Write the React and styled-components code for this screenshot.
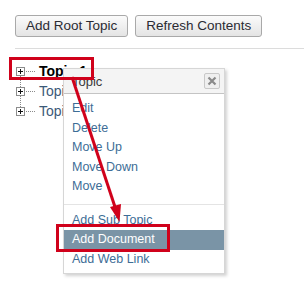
import React from "react"
import styled, { createGlobalStyle } from "styled-components"

const GlobalStyle = createGlobalStyle`
  html, body {
    margin: 0;
    padding: 0;
    background: #ffffff;
    font-family: "Liberation Sans", Arial, sans-serif;
  }
`

const Page = styled.div`
  position: relative;
  width: 304px;
  height: 301px;
  overflow: hidden;
  padding: 15px 0 0 15px;
  box-sizing: border-box;
`

const Toolbar = styled.div`
  display: flex;
  gap: 7px;
`

const Button = styled.button`
  height: 22px;
  padding: 0 10px;
  font-family: "Liberation Sans", Arial, sans-serif;
  font-size: 13.5px;
  color: #2b2b33;
  background: linear-gradient(#fbfbfb, #e4e4e4);
  border: 1px solid #a9a9a9;
  border-radius: 3px;
  line-height: 20px;
`

const Divider = styled.div`
  margin-top: 11px;
  border-top: 1px solid #dcdcdc;
`

const Tree = styled.ul`
  position: relative;
  list-style: none;
  margin: 12px 0 0 1px;
  padding: 0;
`

const Guide = styled.div`
  position: absolute;
  left: 4px;
  top: 15px;
  height: 31px;
  border-left: 1px dotted #8a8a8a;
`

const Node = styled.li`
  display: flex;
  align-items: center;
  height: 20px;
`

const Expander = styled.span`
  position: relative;
  width: 7px;
  height: 7px;
  border: 1px solid #8c8c8c;
  background: #fff;
  flex: none;
  &::before {
    content: "";
    position: absolute;
    left: 1px;
    top: 3px;
    width: 5px;
    height: 1px;
    background: #111;
  }
  &::after {
    content: "";
    position: absolute;
    left: 3px;
    top: 1px;
    width: 1px;
    height: 5px;
    background: #111;
  }
`

const Connector = styled.span`
  width: 9px;
  margin-left: 1px;
  border-top: 1px dotted #8a8a8a;
`

const Label = styled.span`
  margin-left: 4px;
  font-size: 14px;
  font-weight: ${({ $active }) => ($active ? 700 : 400)};
  color: ${({ $active }) => ($active ? "#000" : "#3c5a78")};
`

const Menu = styled.div`
  position: absolute;
  left: 63px;
  top: 68px;
  width: 160px;
  background: #fff;
  border: 1px solid #d6d6d6;
  box-shadow: 2px 2px 3px rgba(0, 0, 0, 0.18);
`

const MenuHeader = styled.div`
  display: flex;
  align-items: center;
  justify-content: space-between;
  height: 24px;
  padding: 0 4px 0 8px;
  background: #f4f4f4;
  border-bottom: 1px solid #c4c4c4;
  font-size: 13px;
  color: #3a3a3a;
`

const CloseButton = styled.span`
  display: flex;
  align-items: center;
  justify-content: center;
  width: 14px;
  height: 14px;
  border: 1px solid #c8c8c8;
  border-radius: 2px;
  background: #efefef;
`

const MenuList = styled.ul`
  list-style: none;
  margin: 0;
  padding: ${({ $top }) => $top} 0 ${({ $bottom }) => $bottom};
`

const MenuItem = styled.li`
  height: 19.5px;
  line-height: 19.5px;
  padding-left: 8px;
  font-size: 12.5px;
  color: ${({ $selected }) => ($selected ? "#ffffff" : "#3d6d96")};
  background: ${({ $selected }) => ($selected ? "#7a94a6" : "transparent")};
`

const Separator = styled.div`
  margin: 7px 0 0;
  border-top: 1px solid #e4e4e4;
`

const Callout = styled.div`
  position: absolute;
  left: ${({ $x }) => $x}px;
  top: ${({ $y }) => $y}px;
  width: ${({ $w }) => $w}px;
  height: ${({ $h }) => $h}px;
  border: 3px solid #d0011b;
  box-sizing: border-box;
`

const Arrow = styled.svg`
  position: absolute;
  left: 0;
  top: 0;
  pointer-events: none;
`

export default function App() {
  return (
    <>
      <GlobalStyle />
      <Page>
        <Toolbar>
          <Button>Add Root Topic</Button>
          <Button>Refresh Contents</Button>
        </Toolbar>
        <Divider />
        <Tree>
          <Guide />
          <Node>
            <Expander />
            <Connector />
            <Label $active>Topic 1</Label>
          </Node>
          <Node>
            <Expander />
            <Connector />
            <Label>Topic 2</Label>
          </Node>
          <Node>
            <Expander />
            <Connector />
            <Label>Topic 3</Label>
          </Node>
        </Tree>

        <Menu>
          <MenuHeader>
            <span>Topic</span>
            <CloseButton>
              <svg width="10" height="10" viewBox="0 0 10 10">
                <path d="M1.5 1.5L8.5 8.5M8.5 1.5L1.5 8.5" stroke="#8a8a8a" strokeWidth="2.2" />
              </svg>
            </CloseButton>
          </MenuHeader>
          <MenuList $top="5px" $bottom="0">
            <MenuItem>Edit</MenuItem>
            <MenuItem>Delete</MenuItem>
            <MenuItem>Move Up</MenuItem>
            <MenuItem>Move Down</MenuItem>
            <MenuItem>Move</MenuItem>
          </MenuList>
          <Separator />
          <MenuList $top="6px" $bottom="4px">
            <MenuItem>Add Sub Topic</MenuItem>
            <MenuItem $selected>Add Document</MenuItem>
            <MenuItem>Add Web Link</MenuItem>
          </MenuList>
        </Menu>

        <Callout $x={9} $y={57} $w={85} $h={23} />
        <Callout $x={56} $y={224} $w={114} $h={28} />
        <Arrow width="304" height="301" viewBox="0 0 304 301">
          <line x1="72" y1="77" x2="116" y2="210" stroke="#d0011b" strokeWidth="3" />
          <polygon points="119.5,222 110,207 121,204" fill="#d0011b" />
        </Arrow>
      </Page>
    </>
  )
}
